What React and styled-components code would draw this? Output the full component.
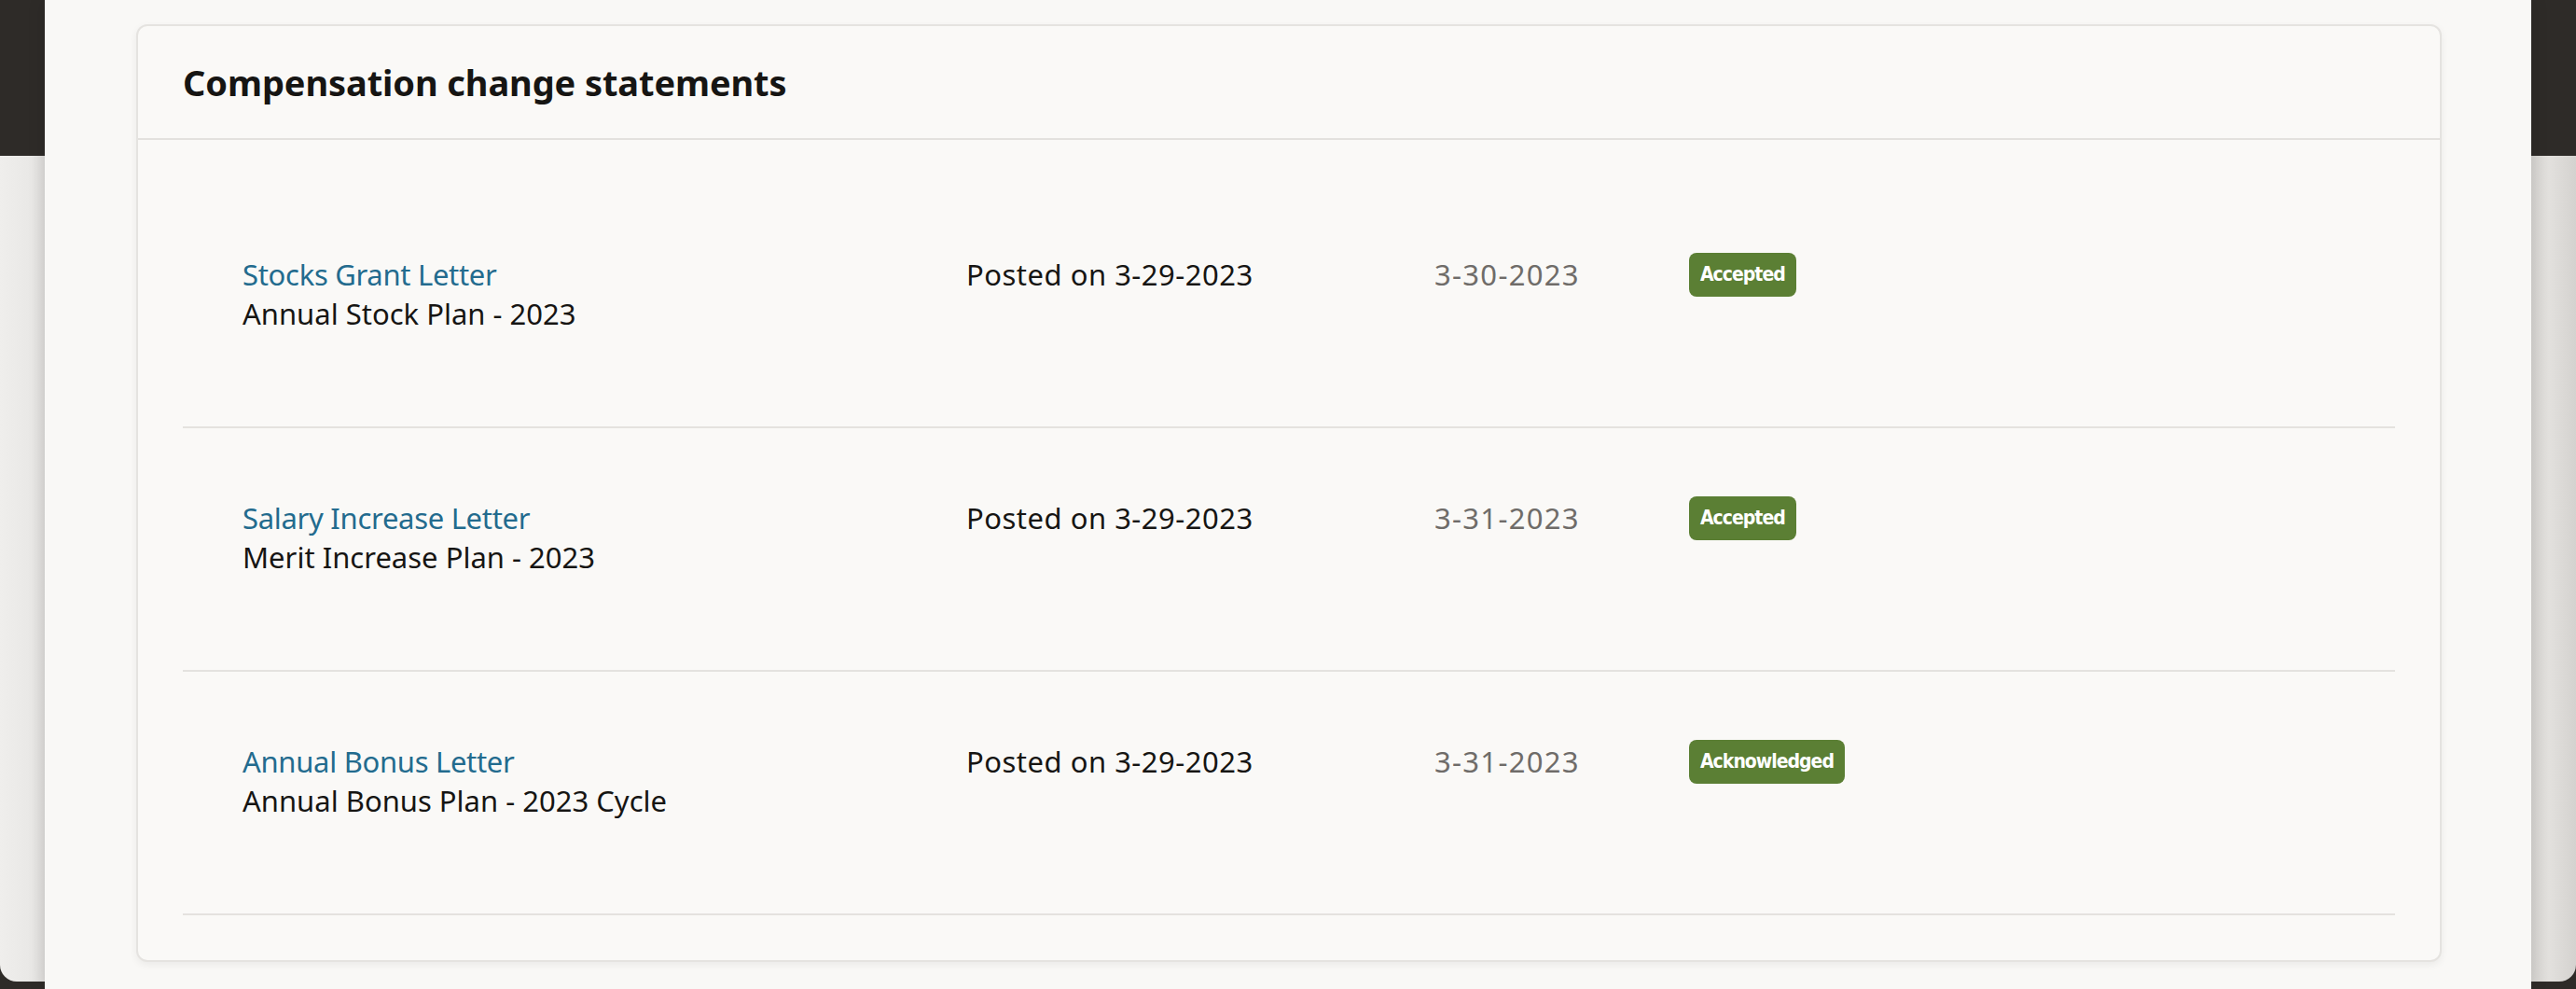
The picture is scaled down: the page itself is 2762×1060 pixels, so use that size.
import React from 'react';
import styled, { createGlobalStyle } from 'styled-components';

const GlobalStyle = createGlobalStyle`
  html, body {
    margin: 0;
    padding: 0;
    background: #2e2b28;
  }
  body {
    font-family: "Noto Sans", "Open Sans", sans-serif;
    color: #161513;
  }
`;

const Page = styled.div`
  display: flex;
  width: 2762px;
  height: 1060px;
  overflow: hidden;
`;

const SideStrip = styled.div`
  width: 48px;
  flex-shrink: 0;
  display: flex;
  flex-direction: column;
  background: ${(p) => (p.side === 'left'
    ? 'linear-gradient(90deg, #efeeec 0%, #e9e8e6 70%, #dedcda 100%)'
    : 'linear-gradient(90deg, #d6d4d1 0%, #e2e0dd 40%, #d4d2cf 100%)')};
  border-bottom-left-radius: ${(p) => (p.side === 'left' ? '18px' : '0')};
  border-bottom-right-radius: ${(p) => (p.side === 'right' ? '18px' : '0')};
  margin-bottom: 8px;
`;

const DarkBand = styled.div`
  height: 167px;
  background: #2e2b28;
`;

const Main = styled.main`
  flex: 1;
  background: #f9f8f6;
  padding: 26px 96px 0 98px;
  box-shadow: 0 0 18px rgba(0, 0, 0, 0.12);
  position: relative;
  z-index: 1;
`;

const Card = styled.section`
  background: #faf9f7;
  border: 2px solid #e5e3e0;
  border-radius: 12px;
  box-shadow: 0 3px 8px rgba(0, 0, 0, 0.06);
`;

const CardHeader = styled.header`
  height: 120px;
  display: flex;
  align-items: center;
  padding: 0 48px;
  border-bottom: 2px solid #e3e1de;
`;

const Title = styled.h2`
  margin: 0;
  font-size: 38px;
  font-weight: 700;
  letter-spacing: -0.1px;
  color: #161513;
`;

const List = styled.ul`
  list-style: none;
  margin: 0;
  padding: 48px;
`;

const Row = styled.li`
  display: grid;
  grid-template-columns: 776px 502px 273px auto;
  align-items: start;
  padding: 75px 0 100px 64px;
  border-bottom: 2px solid #e4e2df;
  font-size: 31px;
  line-height: 42px;
`;

const Info = styled.div`
  display: flex;
  flex-direction: column;
`;

const Link = styled.a`
  color: #236b8e;
  text-decoration: none;
  letter-spacing: -0.3px;
  cursor: pointer;
`;

const Plan = styled.span`
  color: #161513;
`;

const Posted = styled.span`
  color: #161513;
  letter-spacing: 0.5px;
`;

const DateText = styled.span`
  color: #6f6c69;
  letter-spacing: 1.3px;
`;

const BadgeCell = styled.div`
  height: 42px;
  display: flex;
  align-items: center;
`;

const Badge = styled.span`
  display: inline-flex;
  align-items: center;
  height: 47px;
  padding: 0 12px;
  border-radius: 8px;
  background: #5b7f34;
  color: #ffffff;
  font-family: "Liberation Sans Narrow", "DejaVu Sans Condensed", "Noto Sans", sans-serif;
  font-stretch: condensed;
  font-weight: 700;
  font-size: 21px;
  letter-spacing: -1px;
  line-height: 1;
`;

const statements = [
  { title: 'Stocks Grant Letter', plan: 'Annual Stock Plan - 2023', posted: '3-29-2023', date: '3-30-2023', status: 'Accepted' },
  { title: 'Salary Increase Letter', plan: 'Merit Increase Plan - 2023', posted: '3-29-2023', date: '3-31-2023', status: 'Accepted' },
  { title: 'Annual Bonus Letter', plan: 'Annual Bonus Plan - 2023 Cycle', posted: '3-29-2023', date: '3-31-2023', status: 'Acknowledged' },
];

const App = () => (
  <>
    <GlobalStyle />
    <Page>
      <SideStrip side="left">
        <DarkBand />
      </SideStrip>
      <Main>
        <Card>
          <CardHeader>
            <Title>Compensation change statements</Title>
          </CardHeader>
          <List>
            {statements.map((s) => (
              <Row key={s.title}>
                <Info>
                  <Link>{s.title}</Link>
                  <Plan>{s.plan}</Plan>
                </Info>
                <Posted>Posted on {s.posted}</Posted>
                <DateText>{s.date}</DateText>
                <BadgeCell>
                  <Badge>{s.status}</Badge>
                </BadgeCell>
              </Row>
            ))}
          </List>
        </Card>
      </Main>
      <SideStrip side="right">
        <DarkBand />
      </SideStrip>
    </Page>
  </>
);

export default App;
